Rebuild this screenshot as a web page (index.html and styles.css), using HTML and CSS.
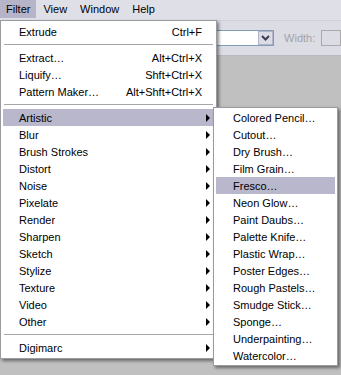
FILE: index.html
```html
<!DOCTYPE html>
<html lang="en">
<head>
  <meta charset="UTF-8" />
  <title>Filter menu</title>
  <link rel="stylesheet" href="styles.css">
</head>
<body>
  <div class="menubar">
    <span class="menubar-item open">Filter</span>
    <span class="menubar-item">View</span>
    <span class="menubar-item">Window</span>
    <span class="menubar-item">Help</span>
  </div>

  <div class="optionsbar">
    <div class="combo">
      <span class="combo-btn">
        <svg width="9" height="6" viewBox="0 0 9 6"><path d="M1 1 L4.5 4.5 L8 1" fill="none" stroke="#3c3c50" stroke-width="2"/></svg>
      </span>
    </div>
    <span class="opt-label">Width:</span>
    <span class="opt-input"></span>
  </div>

  <div class="workspace"></div>

  <!-- Filter menu -->
  <div class="menu main-menu">
    <div class="item"><span class="label">Extrude</span><span class="key">Ctrl+F</span></div>
    <div class="sep"></div>
    <div class="item"><span class="label">Extract…</span><span class="key">Alt+Ctrl+X</span></div>
    <div class="item"><span class="label">Liquify…</span><span class="key">Shft+Ctrl+X</span></div>
    <div class="item"><span class="label">Pattern Maker…</span><span class="key">Alt+Shft+Ctrl+X</span></div>
    <div class="sep"></div>
    <div class="item sub active">
      <span class="label">Artistic</span><span class="arrow"></span>
      <div class="menu submenu">
        <div class="item"><span class="label">Colored Pencil…</span></div>
        <div class="item"><span class="label">Cutout…</span></div>
        <div class="item"><span class="label">Dry Brush…</span></div>
        <div class="item"><span class="label">Film Grain…</span></div>
        <div class="item active"><span class="label">Fresco…</span></div>
        <div class="item"><span class="label">Neon Glow…</span></div>
        <div class="item"><span class="label">Paint Daubs…</span></div>
        <div class="item"><span class="label">Palette Knife…</span></div>
        <div class="item"><span class="label">Plastic Wrap…</span></div>
        <div class="item"><span class="label">Poster Edges…</span></div>
        <div class="item"><span class="label">Rough Pastels…</span></div>
        <div class="item"><span class="label">Smudge Stick…</span></div>
        <div class="item"><span class="label">Sponge…</span></div>
        <div class="item"><span class="label">Underpainting…</span></div>
        <div class="item"><span class="label">Watercolor…</span></div>
      </div>
    </div>
    <div class="item sub"><span class="label">Blur</span><span class="arrow"></span></div>
    <div class="item sub"><span class="label">Brush Strokes</span><span class="arrow"></span></div>
    <div class="item sub"><span class="label">Distort</span><span class="arrow"></span></div>
    <div class="item sub"><span class="label">Noise</span><span class="arrow"></span></div>
    <div class="item sub"><span class="label">Pixelate</span><span class="arrow"></span></div>
    <div class="item sub"><span class="label">Render</span><span class="arrow"></span></div>
    <div class="item sub"><span class="label">Sharpen</span><span class="arrow"></span></div>
    <div class="item sub"><span class="label">Sketch</span><span class="arrow"></span></div>
    <div class="item sub"><span class="label">Stylize</span><span class="arrow"></span></div>
    <div class="item sub"><span class="label">Texture</span><span class="arrow"></span></div>
    <div class="item sub"><span class="label">Video</span><span class="arrow"></span></div>
    <div class="item sub"><span class="label">Other</span><span class="arrow"></span></div>
    <div class="sep"></div>
    <div class="item sub"><span class="label">Digimarc</span><span class="arrow"></span></div>
  </div>
</body>
</html>
```

FILE: styles.css
```css
body {
  margin: 0;
  padding: 0;
  height: 375px;
  display: flex;
  flex-direction: column;
  font-family: "Liberation Sans", Arial, sans-serif;
  font-size: 11px;
  color: #000;
  background-color: #c0c0c0;
  position: relative;
  overflow: hidden;
}

.menubar {
  height: 20px;
  display: flex;
  background-color: #dfdfe7;
}

.menubar-item {
  height: 18px;
  line-height: 18px;
  padding: 0 6px 0 6px;
  margin-right: 1px;
}

.menubar-item.open {
  background-color: #b6b4c9;
}

.optionsbar {
  height: 34px;
  display: flex;
  align-items: center;
  background-color: #dcdce4;
  border-top: 1px solid #d0d0d8;
  border-bottom: 1px solid #b8b8c0;
}

.combo {
  margin-left: 150px;
  width: 138px;
  height: 14px;
  box-sizing: content-box;
  border: 1px solid #7f9db9;
  background: #fff;
  display: flex;
  justify-content: flex-end;
}

.combo-btn {
  width: 15px;
  height: 14px;
  box-sizing: border-box;
  border: 1px solid #b4b4c8;
  background: #dcdce6;
  display: flex;
  align-items: center;
  justify-content: center;
}

.opt-label {
  margin-left: 10px;
  color: #a3a3a8;
}

.opt-input {
  margin-left: 6px;
  width: 20px;
  height: 14px;
  border: 1px solid #aaaaaa;
  background: #dcdce4;
}

.workspace {
  flex: 1;
  background-color: #c0c0c0;
}

/* menus */
.menu {
  position: absolute;
  box-sizing: border-box;
  background: #fff;
  border: 1px solid #9a9aa0;
  box-shadow: 2px 2px 3px rgba(0, 0, 0, 0.45);
}

.main-menu {
  top: 20px;
  left: 0;
  width: 217px;
  padding: 2px;
}

.submenu {
  top: -2px;
  left: calc(100% - 1px);
  width: 125px;
  padding: 1px 2px;
  z-index: 2;
}

.item {
  position: relative;
  height: 17px;
  display: flex;
  align-items: center;
  padding: 0 12px 0 16px;
  white-space: nowrap;
}

.submenu .item {
  padding-left: 17px;
}

.item.sub {
  padding-right: 4px;
}

.item.active {
  background-color: #b9b7cb;
}

.label {
  flex: 1;
}

.arrow {
  width: 0;
  height: 0;
  border-left: 4px solid #000;
  border-top: 4px solid transparent;
  border-bottom: 4px solid transparent;
}

.sep {
  height: 1px;
  margin: 4px 1px;
  background-color: #a6a6a6;
}
```
